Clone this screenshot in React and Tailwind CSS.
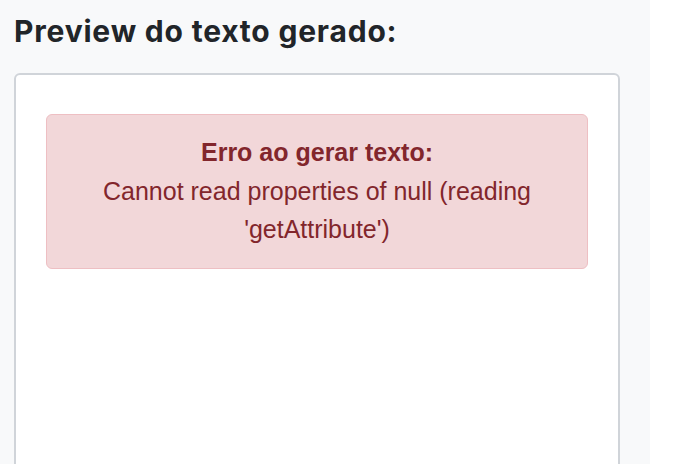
export default function App() {
    return (
        <div className="w-[678px] h-[464px] flex overflow-hidden bg-white">
            {/* Coluna de preview */}
            <div className="w-[650px] h-full bg-[#f8f9fa] pl-[14px] pr-[30px] pt-[14px]">
                <h2 className="font-['Inter',sans-serif] font-bold text-[30px] leading-[35px] text-[#212529] tracking-[0.8px]">
                    Preview do texto gerado:
                </h2>

                <div className="mt-[24px] h-[420px] bg-white border-2 border-[#d0d4d9] rounded-[6px] px-[30px] pt-[39px]">
                    {/* Alerta de erro */}
                    <div className="bg-[#f2d7d9] border border-[#eebfc3] rounded-[6px] pt-[18px] pb-[19px] px-4 text-center text-[#82262c] font-['Liberation_Sans',Arial,sans-serif] text-[25px] leading-[38.5px]">
                        <strong className="font-bold">Erro ao gerar texto:</strong>
                        <br />
                        Cannot read properties of null (reading 'getAttribute')
                    </div>
                </div>
            </div>
        </div>
    );
}
